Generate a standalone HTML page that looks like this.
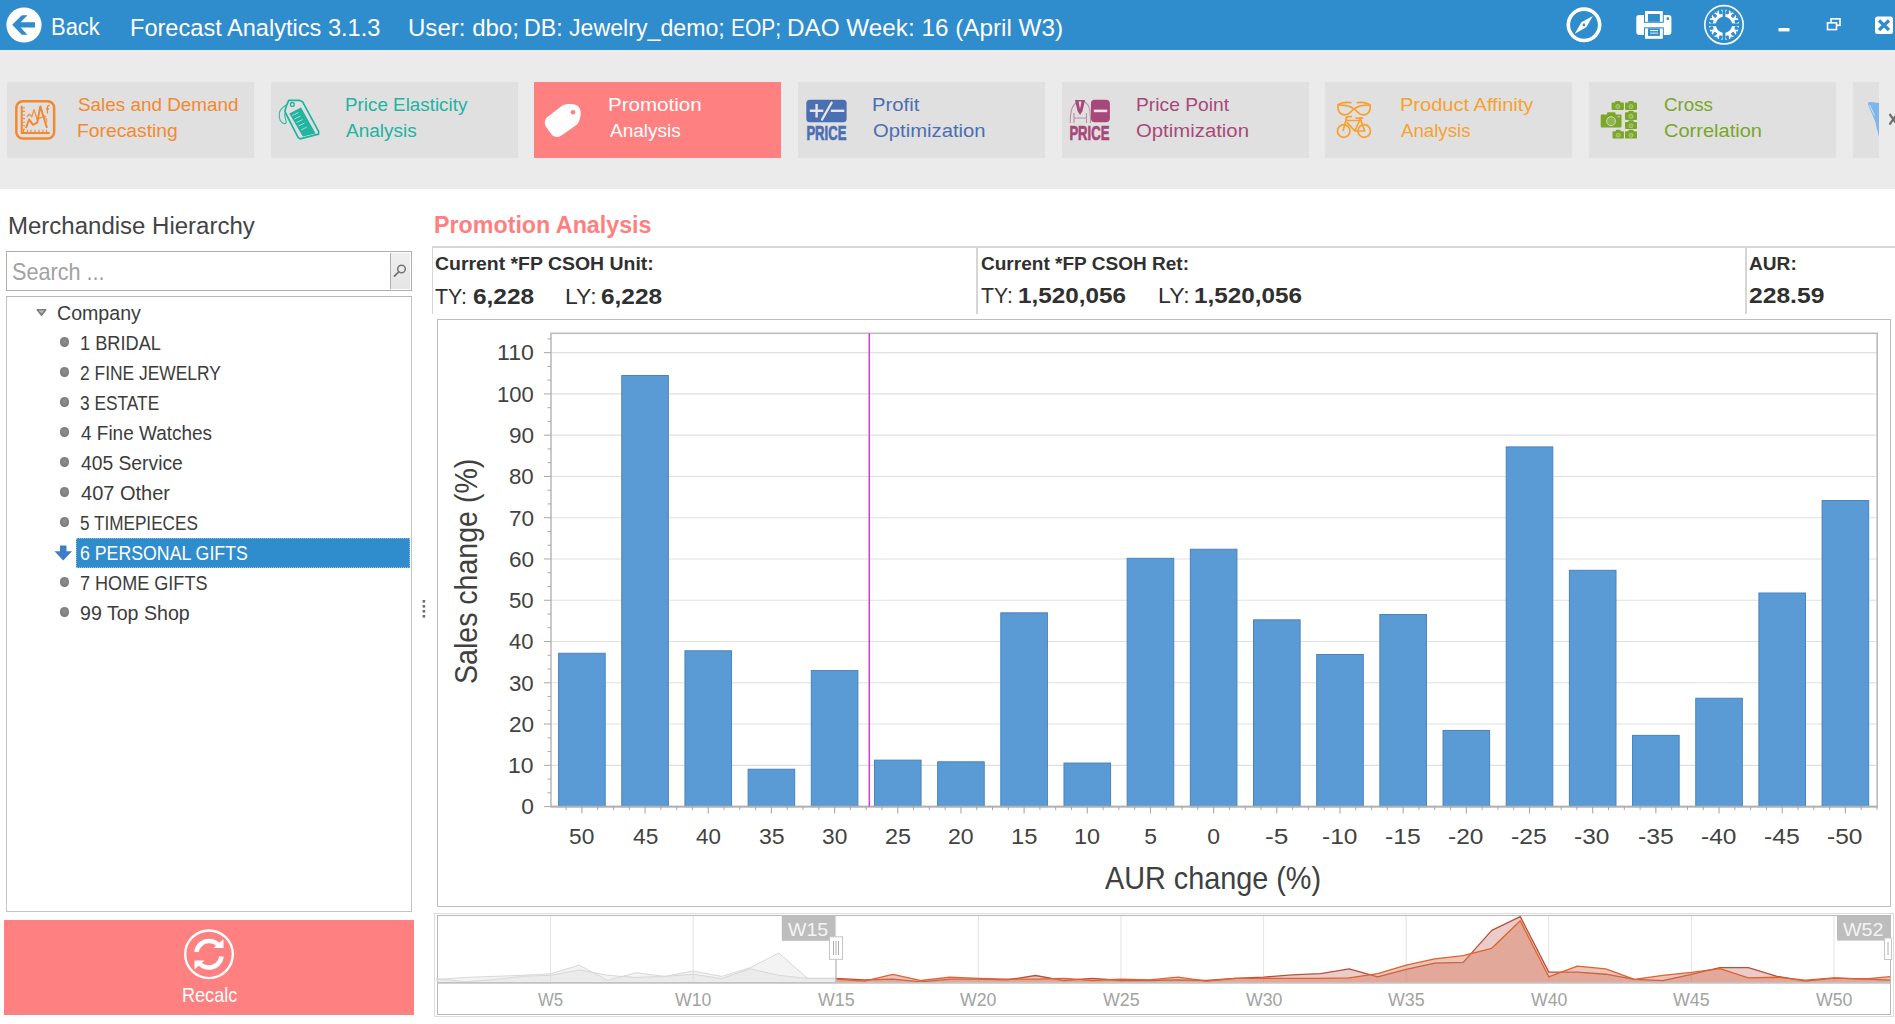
<!DOCTYPE html>
<html><head><meta charset="utf-8"><style>
html,body{margin:0;padding:0}
body{width:1895px;height:1024px;overflow:hidden;position:relative;background:#fff;font-family:"Liberation Sans", sans-serif}
.r{position:absolute;display:block}
.t{position:absolute;white-space:pre;font-family:"Liberation Sans", sans-serif}
</style></head><body>
<div class="r" style="left:0;top:0;width:1895px;height:50px;background:#2f8ccd"></div>
<svg class="r" style="left:0;top:0" width="50" height="50" viewBox="0 0 50 50">
<circle cx="24" cy="25" r="17.6" fill="#fff"/>
<path d="M12.2 24.8 L21.8 15.2 L27.5 15.2 L20.6 22.2 L35 22.2 L35 27.6 L20.6 27.6 L27.5 34.8 L21.8 34.8 Z" fill="#2f8ccd"/>
</svg>
<svg class="r" style="left:1500px;top:0" width="395" height="50" viewBox="1500 0 395 50">
<circle cx="1584" cy="24.8" r="15.7" fill="none" stroke="#fff" stroke-width="3.6"/>
<path d="M1592.9 15.9 L1586.3 27.3 L1574.8 33.7 L1581.4 22.3 Z" fill="#fff"/>
<circle cx="1583.9" cy="24.9" r="1.3" fill="#2f8ccd"/>
<rect x="1636.3" y="15" width="35.1" height="19.9" rx="2.8" fill="#fff"/>
<rect x="1644" y="10" width="19.8" height="12.8" fill="#2f8ccd"/>
<rect x="1645" y="11" width="17.8" height="10.8" fill="#fff"/>
<rect x="1648" y="14" width="11.9" height="7.8" fill="#2f8ccd"/>
<rect x="1644" y="27.3" width="19.8" height="12" fill="#2f8ccd"/>
<rect x="1645" y="28.4" width="17.8" height="10.4" fill="#fff"/>
<rect x="1648" y="28.4" width="11.9" height="7.5" fill="#2f8ccd"/>
<rect x="1650.1" y="30" width="7.9" height="1.1" fill="#fff"/>
<rect x="1650.1" y="32.6" width="7.9" height="1.1" fill="#d8e8f5"/>
<circle cx="1667.8" cy="18.7" r="1.4" fill="#2f8ccd"/>
<circle cx="1724" cy="24.8" r="19.2" fill="none" stroke="#fff" stroke-width="1.6"/>
<circle cx="1724" cy="24.8" r="9.6" fill="none" stroke="#fff" stroke-width="3"/>
<path d="M1722.30 15.30 L1722.50 12.20 L1721.00 9.80 L1727.00 9.80 L1725.50 12.20 L1725.70 15.30 Z M1727.28 15.72 L1729.00 13.14 L1728.90 10.31 L1734.10 13.31 L1731.60 14.64 L1730.22 17.42 Z M1731.38 18.58 L1734.16 17.20 L1735.49 14.70 L1738.49 19.90 L1735.66 19.80 L1733.08 21.52 Z M1733.50 23.10 L1736.60 23.30 L1739.00 21.80 L1739.00 27.80 L1736.60 26.30 L1733.50 26.50 Z M1733.08 28.08 L1735.66 29.80 L1738.49 29.70 L1735.49 34.90 L1734.16 32.40 L1731.38 31.02 Z M1730.22 32.18 L1731.60 34.96 L1734.10 36.29 L1728.90 39.29 L1729.00 36.46 L1727.28 33.88 Z M1725.70 34.30 L1725.50 37.40 L1727.00 39.80 L1721.00 39.80 L1722.50 37.40 L1722.30 34.30 Z M1720.72 33.88 L1719.00 36.46 L1719.10 39.29 L1713.90 36.29 L1716.40 34.96 L1717.78 32.18 Z M1716.62 31.02 L1713.84 32.40 L1712.51 34.90 L1709.51 29.70 L1712.34 29.80 L1714.92 28.08 Z M1714.50 26.50 L1711.40 26.30 L1709.00 27.80 L1709.00 21.80 L1711.40 23.30 L1714.50 23.10 Z M1714.92 21.52 L1712.34 19.80 L1709.51 19.90 L1712.51 14.70 L1713.84 17.20 L1716.62 18.58 Z M1717.78 17.42 L1716.40 14.64 L1713.90 13.31 L1719.10 10.31 L1719.00 13.14 L1720.72 15.72 Z" fill="#fff"/>
<path d="M1722.70 9.60 L1724.00 11.40 L1725.30 9.60 Z M1730.47 10.99 L1730.70 13.20 L1732.73 12.29 Z M1736.51 16.07 L1735.60 18.10 L1737.81 18.33 Z M1739.20 23.50 L1737.40 24.80 L1739.20 26.10 Z M1737.81 31.27 L1735.60 31.50 L1736.51 33.53 Z M1732.73 37.31 L1730.70 36.40 L1730.47 38.61 Z M1725.30 40.00 L1724.00 38.20 L1722.70 40.00 Z M1717.53 38.61 L1717.30 36.40 L1715.27 37.31 Z M1711.49 33.53 L1712.40 31.50 L1710.19 31.27 Z M1708.80 26.10 L1710.60 24.80 L1708.80 23.50 Z M1710.19 18.33 L1712.40 18.10 L1711.49 16.07 Z M1715.27 12.29 L1717.30 13.20 L1717.53 10.99 Z" fill="#2f8ccd"/>
<rect x="1722.6" y="9" width="2.8" height="32" fill="#2f8ccd"/>
<rect x="1708" y="23.4" width="32" height="2.8" fill="#2f8ccd"/>
<rect x="1778.5" y="28" width="11" height="3.4" fill="#fff"/>
<rect x="1831" y="18.8" width="9" height="6.5" fill="none" stroke="#fff" stroke-width="1.6"/>
<rect x="1827.5" y="22.8" width="9" height="6.8" fill="#2f8ccd" stroke="#fff" stroke-width="1.6"/>
<rect x="1875" y="16.5" width="18" height="17.5" rx="2.5" fill="#fff"/>
<path d="M1879 20.5 L1889 30 M1889 20.5 L1879 30" stroke="#2f8ccd" stroke-width="3.2"/>
</svg>
<div class="r" style="left:0;top:50px;width:1895px;height:138.5px;background:#ebebeb"></div>
<div class="r" style="left:7.00px;top:82px;width:247.00px;height:75.6px;background:#e0e0e0"></div>
<div class="r" style="left:270.67px;top:82px;width:247.00px;height:75.6px;background:#e0e0e0"></div>
<div class="r" style="left:534.34px;top:82px;width:247.00px;height:75.6px;background:#ff8080"></div>
<div class="r" style="left:798.01px;top:82px;width:247.00px;height:75.6px;background:#e0e0e0"></div>
<div class="r" style="left:1061.68px;top:82px;width:247.00px;height:75.6px;background:#e0e0e0"></div>
<div class="r" style="left:1325.35px;top:82px;width:247.00px;height:75.6px;background:#e0e0e0"></div>
<div class="r" style="left:1589.02px;top:82px;width:247.00px;height:75.6px;background:#e0e0e0"></div>
<div class="r" style="left:1852.69px;top:82px;width:26.31px;height:75.6px;background:#e0e0e0"></div>
<svg class="r" style="left:15px;top:100px" width="42" height="42" viewBox="0 0 42 42">
<rect x="1.35" y="1.2" width="37.8" height="37.3" rx="6.5" fill="none" stroke="#f5882f" stroke-width="2.5"/>
<g stroke="#f5882f" fill="none" stroke-linejoin="round">
<path d="M6.7 5.8 V33 H34.7" stroke-width="2"/>
<path d="M7.4 7.8h2.6M7.4 11.4h2.6M7.4 15.0h2.6M7.4 18.6h2.6M7.4 22.2h2.6M7.4 25.8h2.6M7.4 29.3h2.6M8.5 32.2v-2.4M12.3 32.2v-2.4M15.9 32.2v-2.4M19.9 32.2v-2.4M24.0 32.2v-2.4M28.0 32.2v-2.4M31.6 32.2v-2.4" stroke-width="1.1"/>
<path d="M10.9 28 L14.1 19.5 L18.1 24.9 L22.2 22.6 L25.3 6.4 L32 28" stroke-width="2"/>
<path d="M11.8 17.2 L14.1 14.1 L16.8 16.8 L19 9.6 L22.2 19.5 L24.9 18.1 L28.4 16.3 L31.1 16.8" stroke-width="1.4" opacity="0.85"/>
<path d="M30.2 18.5 C32 18 32.5 21 31 22.5" stroke-width="1.3" opacity="0.7"/>
</g>
<path d="M32.4 13.6 V8 C32.4 6 33.3 5.2 34.8 5.4 M31 9 H34" stroke="#f5882f" stroke-width="1.4" fill="none"/>
</svg>
<svg class="r" style="left:278px;top:99px" width="44" height="41" viewBox="0 0 44 41">
<path d="M10.75 1.3 L21.3 1.3 L24.5 2.7 L40.6 32.4 L40.6 35.2 L22 39.8 L20.2 38.6 L6.8 12.5 L8.5 6.5 Z" fill="none" stroke="#22b3a1" stroke-width="1.7" stroke-linejoin="round"/>
<path d="M11.3 14.4 L23 8.6 L37.7 34.4 L24.8 37.6 Z" fill="#22b3a1"/>
<circle cx="14.3" cy="5.4" r="1.9" fill="none" stroke="#22b3a1" stroke-width="1.3"/>
<path d="M9.5 5 C5 8 1.5 10.5 1.4 14 C1.2 17 1.2 19 1.9 20.5 C3 23 5 24.6 6.8 24.6 C8 24.6 8.3 23.6 8.1 22.5 C7.5 19.5 6.6 17 6.6 14.4" fill="none" stroke="#22b3a1" stroke-width="1.2" opacity="0.85"/>
<g stroke="#bfe9e2" stroke-width="0.9" fill="none" opacity="0.9">
<path d="M14.5 16.5 L20.5 13.5 M16.5 20 L22.5 17 M18.5 23.5 L24.5 20.5 M20.5 27 L26.5 24 M23 31 L29 28"/>
</g>
</svg>
<svg class="r" style="left:544px;top:102px" width="40" height="36" viewBox="0 0 40 36">
<path d="M25.15 2.06 C30 1.8 34 3 35.5 6 C37.2 9 37 14 35.5 18 C34.5 21 33 23 31 24 L16.95 33.7 C14 35.8 9.5 35 7.57 32.5 L1.7 24.3 C0.3 22 0.5 16.8 3.5 14.9 L16.4 5 C19 3 21.5 2.2 25.15 2.06 Z" fill="#fff"/>
<circle cx="29" cy="10.3" r="2.3" fill="#ff8080"/>
</svg>
<svg class="r" style="left:806px;top:99px" width="42" height="42" viewBox="0 0 42 42">
<rect x="0.3" y="0.7" width="40.3" height="22.5" rx="3.5" fill="#4a6fb3"/>
<path d="M3.8 11.8 H17.3 M10.6 5.1 V18.5" stroke="#e6e6e6" stroke-width="2.4"/>
<path d="M25.7 3.6 L16 20.6" stroke="#e6e6e6" stroke-width="2.2" stroke-linecap="round"/>
<path d="M24.8 11.8 H38.3" stroke="#e6e6e6" stroke-width="2.4"/>
<text x="20.4" y="41.2" text-anchor="middle" font-family="Liberation Sans" font-weight="bold" font-size="19.5" textLength="40" lengthAdjust="spacingAndGlyphs" fill="#4a6fb3" stroke="#4a6fb3" stroke-width="0.7">PRICE</text>
</svg>
<svg class="r" style="left:1069px;top:99px" width="42" height="42" viewBox="0 0 42 42">
<rect x="21.9" y="0.7" width="19" height="22.5" rx="4" fill="#a8487a"/>
<rect x="24.8" y="10.6" width="13.5" height="2.6" fill="#e6e6e6"/>
<g fill="none" stroke="#a8487a" stroke-width="1.1" opacity="0.55">
<path d="M1.2 24 C1.2 15 2 9 5 6 L9 2 L15 2 L19 6 C21 9 21.5 15 21.5 24"/>
<path d="M5 24 V14 M17.5 24 V14 M4.5 19 H18"/>
</g>
<path d="M6 1 L16 1 L13.5 12 L11 16 L8.5 12 Z" fill="#a8487a"/>
<path d="M9.5 2.5 L12.5 2.5 L11 10 Z" fill="#e0e0e0"/>
<text x="20.4" y="41.2" text-anchor="middle" font-family="Liberation Sans" font-weight="bold" font-size="19.5" textLength="40" lengthAdjust="spacingAndGlyphs" fill="#a8487a" stroke="#a8487a" stroke-width="0.7">PRICE</text>
</svg>
<svg class="r" style="left:1336px;top:100px" width="38" height="40" viewBox="0 0 38 40">
<g fill="none" stroke="#f8a12f" stroke-width="1.7" stroke-linecap="round" stroke-linejoin="round">
<path d="M1.9 5 C5 2.5 10 2 14.8 2.6"/><path d="M21.2 2.6 C26 2 31 2.5 34.1 5.2"/>
<path d="M1.9 5.2 C1.5 11 4 14.9 9 14.9 C13.5 14.9 15.2 11.5 17.7 8.7 C14 5.8 7 5 1.9 5.2 Z"/>
<path d="M34.3 5.2 C34.7 11 32.2 14.9 27.2 14.9 C22.7 14.9 21 11.5 18.5 8.7 C22.2 5.8 29.2 5 34.3 5.2 Z"/>
<circle cx="7.7" cy="31" r="6.3"/><circle cx="28.2" cy="31" r="6.3"/>
<path d="M10.7 17.5 L7.2 30.4 M11.3 20.5 H24.1 M11.3 22.8 L18.9 31 L28.6 31 M24.1 18.1 L28.8 31 M18.9 31 L24.1 19"/>
<path d="M10.1 17.5 C11.5 16.5 13.5 16.3 15.4 16.7"/><path d="M20 18.1 H26.5"/>
</g>
</svg>
<svg class="r" style="left:0;top:0" width="1895" height="160" viewBox="0 0 1895 160">
<rect x="1607" y="112.2" width="8.5" height="3.5" rx="1" fill="#7aa62a"/>
<rect x="1600.7" y="114.6" width="20.8" height="13" rx="1" fill="#7aa62a"/>
<circle cx="1611" cy="121.2" r="4.5" fill="#90b555" stroke="#d2e3b5" stroke-width="0.9"/>
<rect x="1617.5" y="116.3" width="2.5" height="1" fill="#c2d8a0"/>
<rect x="1615.04" y="101.00" width="5.41" height="3" rx="1" fill="#7aa62a"/><rect x="1611.60" y="102.60" width="12.30" height="7.30" rx="0.8" fill="#7aa62a"/><circle cx="1617.75" cy="106.55" r="2.04" fill="#90b555" stroke="#c2d8a0" stroke-width="0.6"/><rect x="1628.36" y="101.00" width="5.28" height="3" rx="1" fill="#7aa62a"/><rect x="1625.00" y="102.60" width="12.00" height="7.30" rx="0.8" fill="#7aa62a"/><circle cx="1631.00" cy="106.55" r="2.04" fill="#90b555" stroke="#c2d8a0" stroke-width="0.6"/><rect x="1628.36" y="110.70" width="5.28" height="3" rx="1" fill="#7aa62a"/><rect x="1625.00" y="112.30" width="12.00" height="7.60" rx="0.8" fill="#7aa62a"/><circle cx="1631.00" cy="116.40" r="2.13" fill="#90b555" stroke="#c2d8a0" stroke-width="0.6"/><rect x="1628.36" y="120.30" width="5.28" height="3" rx="1" fill="#7aa62a"/><rect x="1625.00" y="121.90" width="12.00" height="7.10" rx="0.8" fill="#7aa62a"/><circle cx="1631.00" cy="125.75" r="1.99" fill="#90b555" stroke="#c2d8a0" stroke-width="0.6"/><rect x="1615.69" y="129.70" width="5.02" height="3" rx="1" fill="#7aa62a"/><rect x="1612.50" y="131.30" width="11.40" height="7.30" rx="0.8" fill="#7aa62a"/><circle cx="1618.20" cy="135.25" r="2.04" fill="#90b555" stroke="#c2d8a0" stroke-width="0.6"/><rect x="1628.36" y="129.70" width="5.28" height="3" rx="1" fill="#7aa62a"/><rect x="1625.00" y="131.30" width="12.00" height="7.30" rx="0.8" fill="#7aa62a"/><circle cx="1631.00" cy="135.25" r="2.04" fill="#90b555" stroke="#c2d8a0" stroke-width="0.6"/>
</svg>
<svg class="r" style="left:1853px;top:82.5px" width="26" height="75" viewBox="1853 82.5 26 75">
<path d="M1867.8 103.5 C1868 102 1869 101.4 1871 101.6 L1879 102.5 L1879 124 L1876.5 124 Z" fill="#7fb6ea"/>
<path d="M1875.5 123 L1879 123 L1879 136.5 Z" fill="#7fb6ea"/>
<path d="M1869.5 104.5 L1874.5 115" stroke="#e8f1fa" stroke-width="0.8"/>
</svg>
<svg class="r" style="left:1889px;top:112px" width="6" height="14" viewBox="1889 112 6 14">
<path d="M1889.5 114 L1897 124.5 M1897 114 L1889.5 124.5" stroke="#6f6f6f" stroke-width="2.2"/>
</svg>
<div class="r" style="left:6.3px;top:251.2px;width:405.5px;height:39.6px;box-sizing:border-box;border:1.6px solid #afafaf;background:#fff"></div>
<div class="r" style="left:390.2px;top:252.8px;width:20px;height:36.4px;box-sizing:border-box;background:linear-gradient(#f0f0f0,#e4e4e4);border-left:1.5px solid #b0b0b0"></div>
<svg class="r" style="left:391px;top:260px" width="18" height="22" viewBox="0 0 18 22">
<circle cx="10.5" cy="9" r="3.8" fill="none" stroke="#777" stroke-width="1.5"/>
<path d="M7.8 11.8 L3.5 16" stroke="#777" stroke-width="1.8" stroke-linecap="round"/>
</svg>
<div class="r" style="left:6.4px;top:296.3px;width:405.6px;height:616px;box-sizing:border-box;border:1.7px solid #c4c4c4;border-top-color:#b9b9b9"></div>
<svg class="r" style="left:35px;top:307px" width="13" height="10" viewBox="0 0 13 10">
<defs><linearGradient id="tg" x1="0" y1="0" x2="0" y2="1"><stop offset="0" stop-color="#cfcfcf"/><stop offset="1" stop-color="#8a8a8a"/></linearGradient></defs>
<path d="M2.2 2.8 L10.8 2.8 L6.5 8.2 Z" fill="url(#tg)" stroke="#7a7a7a" stroke-width="1.4" stroke-linejoin="round"/>
</svg>
<div class="r" style="left:75.5px;top:537.5px;width:334.5px;height:30px;background:#2f8ccd;box-sizing:border-box;border:1px dotted #8cc0e8"></div>
<div class="r" style="left:60px;top:337.4px;width:9.2px;height:9.2px;border-radius:50%;background:radial-gradient(circle at 50% 45%,#8f8f8f 0,#808080 55%,#5e5e5e 100%)"></div>
<div class="r" style="left:60px;top:367.4px;width:9.2px;height:9.2px;border-radius:50%;background:radial-gradient(circle at 50% 45%,#8f8f8f 0,#808080 55%,#5e5e5e 100%)"></div>
<div class="r" style="left:60px;top:397.4px;width:9.2px;height:9.2px;border-radius:50%;background:radial-gradient(circle at 50% 45%,#8f8f8f 0,#808080 55%,#5e5e5e 100%)"></div>
<div class="r" style="left:60px;top:427.4px;width:9.2px;height:9.2px;border-radius:50%;background:radial-gradient(circle at 50% 45%,#8f8f8f 0,#808080 55%,#5e5e5e 100%)"></div>
<div class="r" style="left:60px;top:457.4px;width:9.2px;height:9.2px;border-radius:50%;background:radial-gradient(circle at 50% 45%,#8f8f8f 0,#808080 55%,#5e5e5e 100%)"></div>
<div class="r" style="left:60px;top:487.4px;width:9.2px;height:9.2px;border-radius:50%;background:radial-gradient(circle at 50% 45%,#8f8f8f 0,#808080 55%,#5e5e5e 100%)"></div>
<div class="r" style="left:60px;top:517.4px;width:9.2px;height:9.2px;border-radius:50%;background:radial-gradient(circle at 50% 45%,#8f8f8f 0,#808080 55%,#5e5e5e 100%)"></div>
<svg class="r" style="left:54px;top:544.5px" width="19" height="16" viewBox="0 0 19 16">
<path d="M6 0.5 H12.5 V6.2 H18 L9.25 15.5 L0.5 6.2 H6 Z" fill="#3d7fc6"/></svg>
<div class="r" style="left:60px;top:577.4px;width:9.2px;height:9.2px;border-radius:50%;background:radial-gradient(circle at 50% 45%,#8f8f8f 0,#808080 55%,#5e5e5e 100%)"></div>
<div class="r" style="left:60px;top:607.4px;width:9.2px;height:9.2px;border-radius:50%;background:radial-gradient(circle at 50% 45%,#8f8f8f 0,#808080 55%,#5e5e5e 100%)"></div>
<div class="r" style="left:4px;top:920px;width:409.5px;height:95px;background:#ff8080"></div>
<svg class="r" style="left:183px;top:927.7px" width="52" height="52" viewBox="0 0 52 52">
<circle cx="26" cy="26.3" r="23.8" fill="none" stroke="#fff" stroke-width="2.4"/>
<path d="M13.5 24 C14.5 17 20 13 26 13 C30.5 13 34 15 36.5 18.2" fill="none" stroke="#fff" stroke-width="4.6"/>
<path d="M30.5 20 L40.5 20 L40.5 11 Z" fill="#fff"/>
<path d="M38.5 28.5 C37.5 35.5 32 39.5 26 39.5 C21.5 39.5 18 37.5 15.5 34.3" fill="none" stroke="#fff" stroke-width="4.6"/>
<path d="M21.5 32.5 L11.5 32.5 L11.5 41.5 Z" fill="#fff"/>
</svg>
<svg class="r" style="left:418px;top:595px" width="12" height="28" viewBox="418 595 12 28">
<rect x="422.6" y="600" width="2.6" height="2.6" fill="#6e6e6e"/><rect x="422.6" y="605" width="2.6" height="2.6" fill="#6e6e6e"/>
<rect x="422.6" y="610" width="2.6" height="2.6" fill="#6e6e6e"/><rect x="422.6" y="615" width="2.6" height="2.6" fill="#6e6e6e"/>
</svg>
<div class="r" style="left:431.5px;top:246px;width:1464px;height:1.6px;background:#d6d6d6"></div>
<div class="r" style="left:431.5px;top:246px;width:1.6px;height:67.5px;background:#d6d6d6"></div>
<div class="r" style="left:976.3px;top:247px;width:1.6px;height:66.5px;background:#d6d6d6"></div>
<div class="r" style="left:1745.2px;top:247px;width:1.6px;height:66.5px;background:#d6d6d6"></div>
<div class="r" style="left:436.5px;top:319px;width:1454.5px;height:588px;box-sizing:border-box;border:1.5px solid #bdbdbd"></div>
<svg class="r" style="left:0;top:0" width="1895" height="1024" viewBox="0 0 1895 1024">
<line x1="551.0" y1="765.33" x2="1877.2" y2="765.33" stroke="#e0e0e0" stroke-width="1.1"/>
<line x1="551.0" y1="724.06" x2="1877.2" y2="724.06" stroke="#e0e0e0" stroke-width="1.1"/>
<line x1="551.0" y1="682.79" x2="1877.2" y2="682.79" stroke="#e0e0e0" stroke-width="1.1"/>
<line x1="551.0" y1="641.52" x2="1877.2" y2="641.52" stroke="#e0e0e0" stroke-width="1.1"/>
<line x1="551.0" y1="600.25" x2="1877.2" y2="600.25" stroke="#e0e0e0" stroke-width="1.1"/>
<line x1="551.0" y1="558.98" x2="1877.2" y2="558.98" stroke="#e0e0e0" stroke-width="1.1"/>
<line x1="551.0" y1="517.71" x2="1877.2" y2="517.71" stroke="#e0e0e0" stroke-width="1.1"/>
<line x1="551.0" y1="476.44" x2="1877.2" y2="476.44" stroke="#e0e0e0" stroke-width="1.1"/>
<line x1="551.0" y1="435.17" x2="1877.2" y2="435.17" stroke="#e0e0e0" stroke-width="1.1"/>
<line x1="551.0" y1="393.90" x2="1877.2" y2="393.90" stroke="#e0e0e0" stroke-width="1.1"/>
<line x1="551.0" y1="352.63" x2="1877.2" y2="352.63" stroke="#e0e0e0" stroke-width="1.1"/>
<rect x="551.0" y="333.3" width="1326.20" height="473.30" fill="none" stroke="#bcbcbc" stroke-width="1.6"/>
<line x1="544.0" y1="806.60" x2="551.0" y2="806.60" stroke="#a8a8a8" stroke-width="1"/>
<line x1="547.5" y1="792.84" x2="551.0" y2="792.84" stroke="#a8a8a8" stroke-width="1"/>
<line x1="547.5" y1="779.09" x2="551.0" y2="779.09" stroke="#a8a8a8" stroke-width="1"/>
<line x1="544.0" y1="765.33" x2="551.0" y2="765.33" stroke="#a8a8a8" stroke-width="1"/>
<line x1="547.5" y1="751.57" x2="551.0" y2="751.57" stroke="#a8a8a8" stroke-width="1"/>
<line x1="547.5" y1="737.82" x2="551.0" y2="737.82" stroke="#a8a8a8" stroke-width="1"/>
<line x1="544.0" y1="724.06" x2="551.0" y2="724.06" stroke="#a8a8a8" stroke-width="1"/>
<line x1="547.5" y1="710.30" x2="551.0" y2="710.30" stroke="#a8a8a8" stroke-width="1"/>
<line x1="547.5" y1="696.55" x2="551.0" y2="696.55" stroke="#a8a8a8" stroke-width="1"/>
<line x1="544.0" y1="682.79" x2="551.0" y2="682.79" stroke="#a8a8a8" stroke-width="1"/>
<line x1="547.5" y1="669.03" x2="551.0" y2="669.03" stroke="#a8a8a8" stroke-width="1"/>
<line x1="547.5" y1="655.28" x2="551.0" y2="655.28" stroke="#a8a8a8" stroke-width="1"/>
<line x1="544.0" y1="641.52" x2="551.0" y2="641.52" stroke="#a8a8a8" stroke-width="1"/>
<line x1="547.5" y1="627.76" x2="551.0" y2="627.76" stroke="#a8a8a8" stroke-width="1"/>
<line x1="547.5" y1="614.01" x2="551.0" y2="614.01" stroke="#a8a8a8" stroke-width="1"/>
<line x1="544.0" y1="600.25" x2="551.0" y2="600.25" stroke="#a8a8a8" stroke-width="1"/>
<line x1="547.5" y1="586.49" x2="551.0" y2="586.49" stroke="#a8a8a8" stroke-width="1"/>
<line x1="547.5" y1="572.74" x2="551.0" y2="572.74" stroke="#a8a8a8" stroke-width="1"/>
<line x1="544.0" y1="558.98" x2="551.0" y2="558.98" stroke="#a8a8a8" stroke-width="1"/>
<line x1="547.5" y1="545.22" x2="551.0" y2="545.22" stroke="#a8a8a8" stroke-width="1"/>
<line x1="547.5" y1="531.47" x2="551.0" y2="531.47" stroke="#a8a8a8" stroke-width="1"/>
<line x1="544.0" y1="517.71" x2="551.0" y2="517.71" stroke="#a8a8a8" stroke-width="1"/>
<line x1="547.5" y1="503.95" x2="551.0" y2="503.95" stroke="#a8a8a8" stroke-width="1"/>
<line x1="547.5" y1="490.20" x2="551.0" y2="490.20" stroke="#a8a8a8" stroke-width="1"/>
<line x1="544.0" y1="476.44" x2="551.0" y2="476.44" stroke="#a8a8a8" stroke-width="1"/>
<line x1="547.5" y1="462.68" x2="551.0" y2="462.68" stroke="#a8a8a8" stroke-width="1"/>
<line x1="547.5" y1="448.93" x2="551.0" y2="448.93" stroke="#a8a8a8" stroke-width="1"/>
<line x1="544.0" y1="435.17" x2="551.0" y2="435.17" stroke="#a8a8a8" stroke-width="1"/>
<line x1="547.5" y1="421.41" x2="551.0" y2="421.41" stroke="#a8a8a8" stroke-width="1"/>
<line x1="547.5" y1="407.66" x2="551.0" y2="407.66" stroke="#a8a8a8" stroke-width="1"/>
<line x1="544.0" y1="393.90" x2="551.0" y2="393.90" stroke="#a8a8a8" stroke-width="1"/>
<line x1="547.5" y1="380.14" x2="551.0" y2="380.14" stroke="#a8a8a8" stroke-width="1"/>
<line x1="547.5" y1="366.39" x2="551.0" y2="366.39" stroke="#a8a8a8" stroke-width="1"/>
<line x1="544.0" y1="352.63" x2="551.0" y2="352.63" stroke="#a8a8a8" stroke-width="1"/>
<line x1="547.5" y1="338.87" x2="551.0" y2="338.87" stroke="#a8a8a8" stroke-width="1"/>
<rect x="558.59" y="653.26" width="46.6" height="153.34" fill="#5b9bd5" stroke="#4a82bd" stroke-width="1"/>
<rect x="621.76" y="375.52" width="46.6" height="431.08" fill="#5b9bd5" stroke="#4a82bd" stroke-width="1"/>
<rect x="684.94" y="650.79" width="46.6" height="155.81" fill="#5b9bd5" stroke="#4a82bd" stroke-width="1"/>
<rect x="748.11" y="769.23" width="46.6" height="37.37" fill="#5b9bd5" stroke="#4a82bd" stroke-width="1"/>
<rect x="811.29" y="670.60" width="46.6" height="136.00" fill="#5b9bd5" stroke="#4a82bd" stroke-width="1"/>
<rect x="874.46" y="760.15" width="46.6" height="46.45" fill="#5b9bd5" stroke="#4a82bd" stroke-width="1"/>
<rect x="937.64" y="761.80" width="46.6" height="44.80" fill="#5b9bd5" stroke="#4a82bd" stroke-width="1"/>
<rect x="1000.81" y="612.82" width="46.6" height="193.78" fill="#5b9bd5" stroke="#4a82bd" stroke-width="1"/>
<rect x="1063.99" y="763.04" width="46.6" height="43.56" fill="#5b9bd5" stroke="#4a82bd" stroke-width="1"/>
<rect x="1127.16" y="558.34" width="46.6" height="248.26" fill="#5b9bd5" stroke="#4a82bd" stroke-width="1"/>
<rect x="1190.34" y="549.26" width="46.6" height="257.34" fill="#5b9bd5" stroke="#4a82bd" stroke-width="1"/>
<rect x="1253.51" y="619.83" width="46.6" height="186.77" fill="#5b9bd5" stroke="#4a82bd" stroke-width="1"/>
<rect x="1316.69" y="654.50" width="46.6" height="152.10" fill="#5b9bd5" stroke="#4a82bd" stroke-width="1"/>
<rect x="1379.86" y="614.47" width="46.6" height="192.13" fill="#5b9bd5" stroke="#4a82bd" stroke-width="1"/>
<rect x="1443.04" y="730.44" width="46.6" height="76.16" fill="#5b9bd5" stroke="#4a82bd" stroke-width="1"/>
<rect x="1506.21" y="446.91" width="46.6" height="359.69" fill="#5b9bd5" stroke="#4a82bd" stroke-width="1"/>
<rect x="1569.39" y="570.31" width="46.6" height="236.29" fill="#5b9bd5" stroke="#4a82bd" stroke-width="1"/>
<rect x="1632.56" y="735.39" width="46.6" height="71.21" fill="#5b9bd5" stroke="#4a82bd" stroke-width="1"/>
<rect x="1695.74" y="698.25" width="46.6" height="108.35" fill="#5b9bd5" stroke="#4a82bd" stroke-width="1"/>
<rect x="1758.91" y="593.01" width="46.6" height="213.59" fill="#5b9bd5" stroke="#4a82bd" stroke-width="1"/>
<rect x="1822.09" y="500.56" width="46.6" height="306.04" fill="#5b9bd5" stroke="#4a82bd" stroke-width="1"/>
<line x1="551.0" y1="806.6" x2="1877.2" y2="806.6" stroke="#b0b0b0" stroke-width="1.6"/>
<line x1="566.09" y1="806.6" x2="566.09" y2="810.1" stroke="#a8a8a8" stroke-width="1"/>
<line x1="581.89" y1="806.6" x2="581.89" y2="813.6" stroke="#a8a8a8" stroke-width="1.1"/>
<line x1="597.68" y1="806.6" x2="597.68" y2="810.1" stroke="#a8a8a8" stroke-width="1"/>
<line x1="613.47" y1="806.6" x2="613.47" y2="810.1" stroke="#a8a8a8" stroke-width="1"/>
<line x1="629.27" y1="806.6" x2="629.27" y2="810.1" stroke="#a8a8a8" stroke-width="1"/>
<line x1="645.06" y1="806.6" x2="645.06" y2="813.6" stroke="#a8a8a8" stroke-width="1.1"/>
<line x1="660.86" y1="806.6" x2="660.86" y2="810.1" stroke="#a8a8a8" stroke-width="1"/>
<line x1="676.65" y1="806.6" x2="676.65" y2="810.1" stroke="#a8a8a8" stroke-width="1"/>
<line x1="692.44" y1="806.6" x2="692.44" y2="810.1" stroke="#a8a8a8" stroke-width="1"/>
<line x1="708.24" y1="806.6" x2="708.24" y2="813.6" stroke="#a8a8a8" stroke-width="1.1"/>
<line x1="724.03" y1="806.6" x2="724.03" y2="810.1" stroke="#a8a8a8" stroke-width="1"/>
<line x1="739.82" y1="806.6" x2="739.82" y2="810.1" stroke="#a8a8a8" stroke-width="1"/>
<line x1="755.62" y1="806.6" x2="755.62" y2="810.1" stroke="#a8a8a8" stroke-width="1"/>
<line x1="771.41" y1="806.6" x2="771.41" y2="813.6" stroke="#a8a8a8" stroke-width="1.1"/>
<line x1="787.21" y1="806.6" x2="787.21" y2="810.1" stroke="#a8a8a8" stroke-width="1"/>
<line x1="803.00" y1="806.6" x2="803.00" y2="810.1" stroke="#a8a8a8" stroke-width="1"/>
<line x1="818.79" y1="806.6" x2="818.79" y2="810.1" stroke="#a8a8a8" stroke-width="1"/>
<line x1="834.59" y1="806.6" x2="834.59" y2="813.6" stroke="#a8a8a8" stroke-width="1.1"/>
<line x1="850.38" y1="806.6" x2="850.38" y2="810.1" stroke="#a8a8a8" stroke-width="1"/>
<line x1="866.17" y1="806.6" x2="866.17" y2="810.1" stroke="#a8a8a8" stroke-width="1"/>
<line x1="881.97" y1="806.6" x2="881.97" y2="810.1" stroke="#a8a8a8" stroke-width="1"/>
<line x1="897.76" y1="806.6" x2="897.76" y2="813.6" stroke="#a8a8a8" stroke-width="1.1"/>
<line x1="913.56" y1="806.6" x2="913.56" y2="810.1" stroke="#a8a8a8" stroke-width="1"/>
<line x1="929.35" y1="806.6" x2="929.35" y2="810.1" stroke="#a8a8a8" stroke-width="1"/>
<line x1="945.14" y1="806.6" x2="945.14" y2="810.1" stroke="#a8a8a8" stroke-width="1"/>
<line x1="960.94" y1="806.6" x2="960.94" y2="813.6" stroke="#a8a8a8" stroke-width="1.1"/>
<line x1="976.73" y1="806.6" x2="976.73" y2="810.1" stroke="#a8a8a8" stroke-width="1"/>
<line x1="992.52" y1="806.6" x2="992.52" y2="810.1" stroke="#a8a8a8" stroke-width="1"/>
<line x1="1008.32" y1="806.6" x2="1008.32" y2="810.1" stroke="#a8a8a8" stroke-width="1"/>
<line x1="1024.11" y1="806.6" x2="1024.11" y2="813.6" stroke="#a8a8a8" stroke-width="1.1"/>
<line x1="1039.91" y1="806.6" x2="1039.91" y2="810.1" stroke="#a8a8a8" stroke-width="1"/>
<line x1="1055.70" y1="806.6" x2="1055.70" y2="810.1" stroke="#a8a8a8" stroke-width="1"/>
<line x1="1071.49" y1="806.6" x2="1071.49" y2="810.1" stroke="#a8a8a8" stroke-width="1"/>
<line x1="1087.29" y1="806.6" x2="1087.29" y2="813.6" stroke="#a8a8a8" stroke-width="1.1"/>
<line x1="1103.08" y1="806.6" x2="1103.08" y2="810.1" stroke="#a8a8a8" stroke-width="1"/>
<line x1="1118.88" y1="806.6" x2="1118.88" y2="810.1" stroke="#a8a8a8" stroke-width="1"/>
<line x1="1134.67" y1="806.6" x2="1134.67" y2="810.1" stroke="#a8a8a8" stroke-width="1"/>
<line x1="1150.46" y1="806.6" x2="1150.46" y2="813.6" stroke="#a8a8a8" stroke-width="1.1"/>
<line x1="1166.26" y1="806.6" x2="1166.26" y2="810.1" stroke="#a8a8a8" stroke-width="1"/>
<line x1="1182.05" y1="806.6" x2="1182.05" y2="810.1" stroke="#a8a8a8" stroke-width="1"/>
<line x1="1197.84" y1="806.6" x2="1197.84" y2="810.1" stroke="#a8a8a8" stroke-width="1"/>
<line x1="1213.64" y1="806.6" x2="1213.64" y2="813.6" stroke="#a8a8a8" stroke-width="1.1"/>
<line x1="1229.43" y1="806.6" x2="1229.43" y2="810.1" stroke="#a8a8a8" stroke-width="1"/>
<line x1="1245.22" y1="806.6" x2="1245.22" y2="810.1" stroke="#a8a8a8" stroke-width="1"/>
<line x1="1261.02" y1="806.6" x2="1261.02" y2="810.1" stroke="#a8a8a8" stroke-width="1"/>
<line x1="1276.81" y1="806.6" x2="1276.81" y2="813.6" stroke="#a8a8a8" stroke-width="1.1"/>
<line x1="1292.61" y1="806.6" x2="1292.61" y2="810.1" stroke="#a8a8a8" stroke-width="1"/>
<line x1="1308.40" y1="806.6" x2="1308.40" y2="810.1" stroke="#a8a8a8" stroke-width="1"/>
<line x1="1324.19" y1="806.6" x2="1324.19" y2="810.1" stroke="#a8a8a8" stroke-width="1"/>
<line x1="1339.99" y1="806.6" x2="1339.99" y2="813.6" stroke="#a8a8a8" stroke-width="1.1"/>
<line x1="1355.78" y1="806.6" x2="1355.78" y2="810.1" stroke="#a8a8a8" stroke-width="1"/>
<line x1="1371.57" y1="806.6" x2="1371.57" y2="810.1" stroke="#a8a8a8" stroke-width="1"/>
<line x1="1387.37" y1="806.6" x2="1387.37" y2="810.1" stroke="#a8a8a8" stroke-width="1"/>
<line x1="1403.16" y1="806.6" x2="1403.16" y2="813.6" stroke="#a8a8a8" stroke-width="1.1"/>
<line x1="1418.96" y1="806.6" x2="1418.96" y2="810.1" stroke="#a8a8a8" stroke-width="1"/>
<line x1="1434.75" y1="806.6" x2="1434.75" y2="810.1" stroke="#a8a8a8" stroke-width="1"/>
<line x1="1450.54" y1="806.6" x2="1450.54" y2="810.1" stroke="#a8a8a8" stroke-width="1"/>
<line x1="1466.34" y1="806.6" x2="1466.34" y2="813.6" stroke="#a8a8a8" stroke-width="1.1"/>
<line x1="1482.13" y1="806.6" x2="1482.13" y2="810.1" stroke="#a8a8a8" stroke-width="1"/>
<line x1="1497.92" y1="806.6" x2="1497.92" y2="810.1" stroke="#a8a8a8" stroke-width="1"/>
<line x1="1513.72" y1="806.6" x2="1513.72" y2="810.1" stroke="#a8a8a8" stroke-width="1"/>
<line x1="1529.51" y1="806.6" x2="1529.51" y2="813.6" stroke="#a8a8a8" stroke-width="1.1"/>
<line x1="1545.31" y1="806.6" x2="1545.31" y2="810.1" stroke="#a8a8a8" stroke-width="1"/>
<line x1="1561.10" y1="806.6" x2="1561.10" y2="810.1" stroke="#a8a8a8" stroke-width="1"/>
<line x1="1576.89" y1="806.6" x2="1576.89" y2="810.1" stroke="#a8a8a8" stroke-width="1"/>
<line x1="1592.69" y1="806.6" x2="1592.69" y2="813.6" stroke="#a8a8a8" stroke-width="1.1"/>
<line x1="1608.48" y1="806.6" x2="1608.48" y2="810.1" stroke="#a8a8a8" stroke-width="1"/>
<line x1="1624.27" y1="806.6" x2="1624.27" y2="810.1" stroke="#a8a8a8" stroke-width="1"/>
<line x1="1640.07" y1="806.6" x2="1640.07" y2="810.1" stroke="#a8a8a8" stroke-width="1"/>
<line x1="1655.86" y1="806.6" x2="1655.86" y2="813.6" stroke="#a8a8a8" stroke-width="1.1"/>
<line x1="1671.66" y1="806.6" x2="1671.66" y2="810.1" stroke="#a8a8a8" stroke-width="1"/>
<line x1="1687.45" y1="806.6" x2="1687.45" y2="810.1" stroke="#a8a8a8" stroke-width="1"/>
<line x1="1703.24" y1="806.6" x2="1703.24" y2="810.1" stroke="#a8a8a8" stroke-width="1"/>
<line x1="1719.04" y1="806.6" x2="1719.04" y2="813.6" stroke="#a8a8a8" stroke-width="1.1"/>
<line x1="1734.83" y1="806.6" x2="1734.83" y2="810.1" stroke="#a8a8a8" stroke-width="1"/>
<line x1="1750.62" y1="806.6" x2="1750.62" y2="810.1" stroke="#a8a8a8" stroke-width="1"/>
<line x1="1766.42" y1="806.6" x2="1766.42" y2="810.1" stroke="#a8a8a8" stroke-width="1"/>
<line x1="1782.21" y1="806.6" x2="1782.21" y2="813.6" stroke="#a8a8a8" stroke-width="1.1"/>
<line x1="1798.01" y1="806.6" x2="1798.01" y2="810.1" stroke="#a8a8a8" stroke-width="1"/>
<line x1="1813.80" y1="806.6" x2="1813.80" y2="810.1" stroke="#a8a8a8" stroke-width="1"/>
<line x1="1829.59" y1="806.6" x2="1829.59" y2="810.1" stroke="#a8a8a8" stroke-width="1"/>
<line x1="1845.39" y1="806.6" x2="1845.39" y2="813.6" stroke="#a8a8a8" stroke-width="1.1"/>
<line x1="1861.18" y1="806.6" x2="1861.18" y2="810.1" stroke="#a8a8a8" stroke-width="1"/>
<line x1="1876.97" y1="806.6" x2="1876.97" y2="810.1" stroke="#a8a8a8" stroke-width="1"/>
<line x1="869.3" y1="333.3" x2="869.3" y2="806.6" stroke="#d63ad6" stroke-width="1.5"/>
</svg>
<div class="r" style="left:434px;top:913px;width:1460px;height:104px;box-sizing:border-box;border:1.3px solid #dcdcdc"></div>
<div class="r" style="left:436.7px;top:915px;width:1454.5px;height:99.5px;box-sizing:border-box;border:1.6px solid #b9b9b9;background:#fff"></div>
<svg class="r" style="left:0;top:0" width="1895" height="1024" viewBox="0 0 1895 1024">
<line x1="550.58" y1="916" x2="550.58" y2="982.3" stroke="#e3e3e3" stroke-width="1"/>
<line x1="693.18" y1="916" x2="693.18" y2="982.3" stroke="#e3e3e3" stroke-width="1"/>
<line x1="835.78" y1="916" x2="835.78" y2="982.3" stroke="#e3e3e3" stroke-width="1"/>
<line x1="978.38" y1="916" x2="978.38" y2="982.3" stroke="#e3e3e3" stroke-width="1"/>
<line x1="1120.98" y1="916" x2="1120.98" y2="982.3" stroke="#e3e3e3" stroke-width="1"/>
<line x1="1263.58" y1="916" x2="1263.58" y2="982.3" stroke="#e3e3e3" stroke-width="1"/>
<line x1="1406.18" y1="916" x2="1406.18" y2="982.3" stroke="#e3e3e3" stroke-width="1"/>
<line x1="1548.78" y1="916" x2="1548.78" y2="982.3" stroke="#e3e3e3" stroke-width="1"/>
<line x1="1691.38" y1="916" x2="1691.38" y2="982.3" stroke="#e3e3e3" stroke-width="1"/>
<line x1="1833.98" y1="916" x2="1833.98" y2="982.3" stroke="#e3e3e3" stroke-width="1"/>
<path d="M436.50 982.30 L436.50 979.64 L465.02 977.48 L493.54 976.40 L522.06 975.32 L550.58 973.80 L579.10 965.15 L607.62 980.29 L636.14 972.72 L664.66 976.40 L693.18 970.99 L721.70 976.40 L750.22 967.74 L778.74 953.03 L807.26 978.13 L835.78 978.13 L835.78 982.30 Z" fill="#dcdcdc" fill-opacity="0.35"/><path d="M436.50 979.64 L465.02 977.48 L493.54 976.40 L522.06 975.32 L550.58 973.80 L579.10 965.15 L607.62 980.29 L636.14 972.72 L664.66 976.40 L693.18 970.99 L721.70 976.40 L750.22 967.74 L778.74 953.03 L807.26 978.13 L835.78 978.13" fill="none" stroke="#d8d8d8" stroke-width="1.0" stroke-linejoin="round"/>
<path d="M436.50 982.30 L436.50 978.56 L465.02 981.81 L493.54 979.64 L522.06 976.40 L550.58 975.32 L579.10 969.91 L607.62 975.32 L636.14 977.48 L664.66 976.40 L693.18 974.23 L721.70 978.56 L750.22 968.83 L778.74 975.32 L807.26 978.56 L835.78 978.56 L835.78 982.30 Z" fill="#dcdcdc" fill-opacity="0.35"/><path d="M436.50 978.56 L465.02 981.81 L493.54 979.64 L522.06 976.40 L550.58 975.32 L579.10 969.91 L607.62 975.32 L636.14 977.48 L664.66 976.40 L693.18 974.23 L721.70 978.56 L750.22 968.83 L778.74 975.32 L807.26 978.56 L835.78 978.56" fill="none" stroke="#d8d8d8" stroke-width="1.0" stroke-linejoin="round"/>
<path d="M835.78 982.30 L835.78 978.29 L864.30 979.97 L892.82 979.13 L921.34 981.92 L949.86 979.13 L978.38 979.13 L1006.90 979.97 L1035.42 975.49 L1063.94 980.52 L1092.46 978.29 L1120.98 980.52 L1149.50 980.52 L1178.02 979.97 L1206.54 980.52 L1235.06 978.29 L1263.58 977.17 L1292.10 974.93 L1320.62 973.53 L1349.14 968.96 L1377.66 976.77 L1406.18 969.38 L1434.70 963.05 L1463.22 962.41 L1491.74 930.33 L1520.26 916.61 L1548.78 972.12 L1577.30 972.12 L1605.82 974.23 L1634.34 979.30 L1662.86 980.53 L1691.38 974.36 L1719.90 967.62 L1748.42 967.62 L1776.94 976.29 L1805.46 981.11 L1833.98 978.22 L1862.50 978.80 L1890.00 980.14 L1890.00 982.30 Z" fill="#c0605a" fill-opacity="0.32"/><path d="M835.78 978.29 L864.30 979.97 L892.82 979.13 L921.34 981.92 L949.86 979.13 L978.38 979.13 L1006.90 979.97 L1035.42 975.49 L1063.94 980.52 L1092.46 978.29 L1120.98 980.52 L1149.50 980.52 L1178.02 979.97 L1206.54 980.52 L1235.06 978.29 L1263.58 977.17 L1292.10 974.93 L1320.62 973.53 L1349.14 968.96 L1377.66 976.77 L1406.18 969.38 L1434.70 963.05 L1463.22 962.41 L1491.74 930.33 L1520.26 916.61 L1548.78 972.12 L1577.30 972.12 L1605.82 974.23 L1634.34 979.30 L1662.86 980.53 L1691.38 974.36 L1719.90 967.62 L1748.42 967.62 L1776.94 976.29 L1805.46 981.11 L1833.98 978.22 L1862.50 978.80 L1890.00 980.14" fill="none" stroke="#b8503a" stroke-width="1.3" stroke-linejoin="round"/>
<path d="M835.78 982.30 L835.78 979.13 L864.30 981.08 L892.82 974.37 L921.34 980.52 L949.86 977.17 L978.38 978.29 L1006.90 979.13 L1035.42 979.13 L1063.94 978.29 L1092.46 980.52 L1120.98 979.13 L1149.50 979.97 L1178.02 977.17 L1206.54 981.08 L1235.06 978.29 L1263.58 978.29 L1292.10 978.29 L1320.62 978.29 L1349.14 977.82 L1377.66 973.60 L1406.18 965.16 L1434.70 958.83 L1463.22 955.66 L1491.74 948.27 L1520.26 920.83 L1548.78 976.77 L1577.30 966.21 L1605.82 968.96 L1634.34 979.30 L1662.86 975.33 L1691.38 972.44 L1719.90 968.58 L1748.42 977.83 L1776.94 977.25 L1805.46 980.14 L1833.98 977.83 L1862.50 979.18 L1890.00 976.68 L1890.00 982.30 Z" fill="#d87c5e" fill-opacity="0.45"/><path d="M835.78 979.13 L864.30 981.08 L892.82 974.37 L921.34 980.52 L949.86 977.17 L978.38 978.29 L1006.90 979.13 L1035.42 979.13 L1063.94 978.29 L1092.46 980.52 L1120.98 979.13 L1149.50 979.97 L1178.02 977.17 L1206.54 981.08 L1235.06 978.29 L1263.58 978.29 L1292.10 978.29 L1320.62 978.29 L1349.14 977.82 L1377.66 973.60 L1406.18 965.16 L1434.70 958.83 L1463.22 955.66 L1491.74 948.27 L1520.26 920.83 L1548.78 976.77 L1577.30 966.21 L1605.82 968.96 L1634.34 979.30 L1662.86 975.33 L1691.38 972.44 L1719.90 968.58 L1748.42 977.83 L1776.94 977.25 L1805.46 980.14 L1833.98 977.83 L1862.50 979.18 L1890.00 976.68" fill="none" stroke="#e0622e" stroke-width="1.3" stroke-linejoin="round"/>
<line x1="437.5" y1="982.9" x2="1890" y2="982.9" stroke="#c2c2c2" stroke-width="1.8"/>
<rect x="781.8" y="915.8" width="53.5" height="25" fill="#bdbdbd"/>
<line x1="836" y1="941" x2="836" y2="982" stroke="#bdbdbd" stroke-width="1.2"/>
<rect x="829.5" y="936.8" width="13" height="22.5" fill="#fff" stroke="#c5c5c5" stroke-width="1"/>
<path d="M833.5 941v14M836 941v14M838.5 941v14" stroke="#9a9a9a" stroke-width="0.8"/>
<rect x="1837" y="916" width="53.6" height="24.6" fill="#bdbdbd"/>
<rect x="1884.5" y="938" width="7" height="21.5" fill="#fff" stroke="#c5c5c5" stroke-width="1"/>
<path d="M1888 942v13" stroke="#9a9a9a" stroke-width="0.8"/>
</svg>
<div class="t" style="left:451.79px;top:683.79px;font-size:30.72px;line-height:30.72px;color:#404040;transform-origin:0 0;transform:rotate(-90deg) scaleX(0.9293)">Sales change (%)</div>
<div class="t" style="left:50.58px;top:16.00px;font-size:23.04px;line-height:23.04px;transform-origin:0 0;transform:scaleX(0.9540);color:#fff;font-weight:400;">Back</div>
<div class="t" style="left:130.06px;top:16.00px;font-size:24.78px;line-height:24.78px;transform-origin:0 0;transform:scaleX(0.9521);color:#fff;font-weight:400;">Forecast Analytics 3.1.3</div>
<div class="t" style="left:408.00px;top:16.00px;font-size:24.78px;line-height:24.78px;transform-origin:0 0;transform:scaleX(0.9709);color:#fff;font-weight:400;">User: dbo;</div>
<div class="t" style="left:523.79px;top:16.00px;font-size:24.78px;line-height:24.78px;transform-origin:0 0;transform:scaleX(0.9352);color:#fff;font-weight:400;">DB: Jewelry_demo;</div>
<div class="t" style="left:731.06px;top:16.00px;font-size:24.78px;line-height:24.78px;transform-origin:0 0;transform:scaleX(0.8479);color:#fff;font-weight:400;">EOP;</div>
<div class="t" style="left:786.80px;top:16.00px;font-size:24.78px;line-height:24.78px;transform-origin:0 0;transform:scaleX(0.9801);color:#fff;font-weight:400;">DAO Week: 16 (April W3)</div>
<div class="t" style="left:77.91px;top:95.00px;font-size:19.13px;line-height:19.13px;transform-origin:0 0;transform:scaleX(0.9873);color:#f5882f;font-weight:400;">Sales and Demand</div>
<div class="t" style="left:76.99px;top:121.00px;font-size:19.13px;line-height:19.13px;transform-origin:0 0;transform:scaleX(1.0094);color:#f5882f;font-weight:400;">Forecasting</div>
<div class="t" style="left:344.93px;top:95.00px;font-size:19.13px;line-height:19.13px;transform-origin:0 0;transform:scaleX(0.9847);color:#22b3a1;font-weight:400;">Price Elasticity</div>
<div class="t" style="left:346.40px;top:121.00px;font-size:19.13px;line-height:19.13px;transform-origin:0 0;transform:scaleX(0.9952);color:#22b3a1;font-weight:400;">Analysis</div>
<div class="t" style="left:607.89px;top:95.00px;font-size:19.13px;line-height:19.13px;transform-origin:0 0;transform:scaleX(1.0754);color:#ffffff;font-weight:400;">Promotion</div>
<div class="t" style="left:609.50px;top:121.00px;font-size:19.13px;line-height:19.13px;transform-origin:0 0;transform:scaleX(0.9952);color:#ffffff;font-weight:400;">Analysis</div>
<div class="t" style="left:872.42px;top:95.00px;font-size:19.13px;line-height:19.13px;transform-origin:0 0;transform:scaleX(1.0597);color:#4a6fb3;font-weight:400;">Profit</div>
<div class="t" style="left:873.05px;top:121.00px;font-size:19.13px;line-height:19.13px;transform-origin:0 0;transform:scaleX(1.0599);color:#4a6fb3;font-weight:400;">Optimization</div>
<div class="t" style="left:1135.80px;top:95.00px;font-size:19.13px;line-height:19.13px;transform-origin:0 0;transform:scaleX(1.0069);color:#a8487a;font-weight:400;">Price Point</div>
<div class="t" style="left:1136.35px;top:121.00px;font-size:19.13px;line-height:19.13px;transform-origin:0 0;transform:scaleX(1.0637);color:#a8487a;font-weight:400;">Optimization</div>
<div class="t" style="left:1399.63px;top:95.00px;font-size:19.13px;line-height:19.13px;transform-origin:0 0;transform:scaleX(1.0488);color:#f8a12f;font-weight:400;">Product Affinity</div>
<div class="t" style="left:1401.20px;top:121.00px;font-size:19.13px;line-height:19.13px;transform-origin:0 0;transform:scaleX(0.9768);color:#f8a12f;font-weight:400;">Analysis</div>
<div class="t" style="left:1663.62px;top:95.00px;font-size:19.13px;line-height:19.13px;transform-origin:0 0;transform:scaleX(0.9802);color:#7aa62a;font-weight:400;">Cross</div>
<div class="t" style="left:1663.56px;top:121.00px;font-size:19.13px;line-height:19.13px;transform-origin:0 0;transform:scaleX(1.0481);color:#7aa62a;font-weight:400;">Correlation</div>
<div class="t" style="left:7.82px;top:215.00px;font-size:23.48px;line-height:23.48px;transform-origin:0 0;transform:scaleX(1.0227);color:#444444;font-weight:400;">Merchandise Hierarchy</div>
<div class="t" style="left:11.82px;top:261.00px;font-size:23.19px;line-height:23.19px;transform-origin:0 0;transform:scaleX(0.9334);color:#a2a2a2;font-weight:400;">Search ...</div>
<div class="t" style="left:57.38px;top:304.00px;font-size:19.71px;line-height:19.71px;transform-origin:0 0;transform:scaleX(0.9948);color:#3c3c3c;font-weight:400;">Company</div>
<div class="t" style="left:79.86px;top:334.00px;font-size:19.71px;line-height:19.71px;transform-origin:0 0;transform:scaleX(0.9242);color:#3c3c3c;font-weight:400;">1 BRIDAL</div>
<div class="t" style="left:80.18px;top:364.00px;font-size:19.71px;line-height:19.71px;transform-origin:0 0;transform:scaleX(0.8838);color:#3c3c3c;font-weight:400;">2 FINE JEWELRY</div>
<div class="t" style="left:80.46px;top:394.00px;font-size:19.71px;line-height:19.71px;transform-origin:0 0;transform:scaleX(0.8790);color:#3c3c3c;font-weight:400;">3 ESTATE</div>
<div class="t" style="left:80.70px;top:424.00px;font-size:19.71px;line-height:19.71px;transform-origin:0 0;transform:scaleX(0.9632);color:#3c3c3c;font-weight:400;">4 Fine Watches</div>
<div class="t" style="left:80.70px;top:454.00px;font-size:19.71px;line-height:19.71px;transform-origin:0 0;transform:scaleX(0.9789);color:#3c3c3c;font-weight:400;">405 Service</div>
<div class="t" style="left:80.69px;top:484.00px;font-size:19.71px;line-height:19.71px;transform-origin:0 0;transform:scaleX(1.0166);color:#3c3c3c;font-weight:400;">407 Other</div>
<div class="t" style="left:80.46px;top:514.00px;font-size:19.71px;line-height:19.71px;transform-origin:0 0;transform:scaleX(0.8707);color:#3c3c3c;font-weight:400;">5 TIMEPIECES</div>
<div class="t" style="left:80.17px;top:544.00px;font-size:19.42px;line-height:19.42px;transform-origin:0 0;transform:scaleX(0.9135);color:#ffffff;font-weight:400;">6 PERSONAL GIFTS</div>
<div class="t" style="left:80.15px;top:574.00px;font-size:19.71px;line-height:19.71px;transform-origin:0 0;transform:scaleX(0.9175);color:#3c3c3c;font-weight:400;">7 HOME GIFTS</div>
<div class="t" style="left:80.08px;top:604.00px;font-size:19.71px;line-height:19.71px;transform-origin:0 0;transform:scaleX(0.9957);color:#3c3c3c;font-weight:400;">99 Top Shop</div>
<div class="t" style="left:181.59px;top:986.00px;font-size:19.42px;line-height:19.42px;transform-origin:0 0;transform:scaleX(0.9315);color:#fff;font-weight:400;">Recalc</div>
<div class="t" style="left:433.85px;top:213.00px;font-size:23.91px;line-height:23.91px;transform-origin:0 0;transform:scaleX(0.9726);color:#ff7f7f;font-weight:700;">Promotion Analysis</div>
<div class="t" style="left:435.39px;top:255.00px;font-size:18.84px;line-height:18.84px;transform-origin:0 0;transform:scaleX(1.0317);color:#303030;font-weight:700;">Current *FP CSOH Unit:</div>
<div class="t" style="left:435.37px;top:285.00px;font-size:22.90px;line-height:22.90px;transform-origin:0 0;transform:scaleX(0.9332);color:#303030;font-weight:400;">TY:</div>
<div class="t" style="left:472.94px;top:285.00px;font-size:22.90px;line-height:22.90px;transform-origin:0 0;transform:scaleX(1.0658);color:#303030;font-weight:700;">6,228</div>
<div class="t" style="left:564.50px;top:285.00px;font-size:22.90px;line-height:22.90px;transform-origin:0 0;transform:scaleX(1.0055);color:#303030;font-weight:400;">LY:</div>
<div class="t" style="left:601.24px;top:285.00px;font-size:22.90px;line-height:22.90px;transform-origin:0 0;transform:scaleX(1.0658);color:#303030;font-weight:700;">6,228</div>
<div class="t" style="left:980.70px;top:255.00px;font-size:18.84px;line-height:18.84px;transform-origin:0 0;transform:scaleX(1.0110);color:#303030;font-weight:700;">Current *FP CSOH Ret:</div>
<div class="t" style="left:980.97px;top:284.00px;font-size:22.90px;line-height:22.90px;transform-origin:0 0;transform:scaleX(0.9269);color:#303030;font-weight:400;">TY:</div>
<div class="t" style="left:1018.38px;top:284.00px;font-size:22.90px;line-height:22.90px;transform-origin:0 0;transform:scaleX(1.0594);color:#303030;font-weight:700;">1,520,056</div>
<div class="t" style="left:1157.99px;top:284.00px;font-size:22.90px;line-height:22.90px;transform-origin:0 0;transform:scaleX(1.0091);color:#303030;font-weight:400;">LY:</div>
<div class="t" style="left:1194.18px;top:284.00px;font-size:22.90px;line-height:22.90px;transform-origin:0 0;transform:scaleX(1.0594);color:#303030;font-weight:700;">1,520,056</div>
<div class="t" style="left:1749.00px;top:255.00px;font-size:18.84px;line-height:18.84px;transform-origin:0 0;transform:scaleX(1.0147);color:#303030;font-weight:700;">AUR:</div>
<div class="t" style="left:1748.63px;top:284.00px;font-size:22.90px;line-height:22.90px;transform-origin:0 0;transform:scaleX(1.0763);color:#303030;font-weight:700;">228.59</div>
<div class="t" style="left:521.21px;top:795.00px;font-size:22.75px;line-height:22.75px;letter-spacing:0.000px;color:#424242;font-weight:400;">0</div>
<div class="t" style="left:508.37px;top:754.00px;font-size:22.75px;line-height:22.75px;transform-origin:0 0;transform:scaleX(1.0077);color:#424242;font-weight:400;">10</div>
<div class="t" style="left:508.74px;top:713.00px;font-size:22.75px;line-height:22.75px;transform-origin:0 0;transform:scaleX(0.9926);color:#424242;font-weight:400;">20</div>
<div class="t" style="left:509.10px;top:672.00px;font-size:22.75px;line-height:22.75px;transform-origin:0 0;transform:scaleX(0.9779);color:#424242;font-weight:400;">30</div>
<div class="t" style="left:509.46px;top:630.00px;font-size:22.75px;line-height:22.75px;transform-origin:0 0;transform:scaleX(0.9636);color:#424242;font-weight:400;">40</div>
<div class="t" style="left:509.10px;top:589.00px;font-size:22.75px;line-height:22.75px;transform-origin:0 0;transform:scaleX(0.9779);color:#424242;font-weight:400;">50</div>
<div class="t" style="left:508.74px;top:548.00px;font-size:22.75px;line-height:22.75px;transform-origin:0 0;transform:scaleX(0.9926);color:#424242;font-weight:400;">60</div>
<div class="t" style="left:508.74px;top:507.00px;font-size:22.75px;line-height:22.75px;transform-origin:0 0;transform:scaleX(0.9926);color:#424242;font-weight:400;">70</div>
<div class="t" style="left:509.10px;top:465.00px;font-size:22.75px;line-height:22.75px;transform-origin:0 0;transform:scaleX(0.9779);color:#424242;font-weight:400;">80</div>
<div class="t" style="left:508.74px;top:424.00px;font-size:22.75px;line-height:22.75px;transform-origin:0 0;transform:scaleX(0.9926);color:#424242;font-weight:400;">90</div>
<div class="t" style="left:497.12px;top:383.00px;font-size:22.75px;line-height:22.75px;transform-origin:0 0;transform:scaleX(0.9673);color:#424242;font-weight:400;">100</div>
<div class="t" style="left:497.06px;top:341.00px;font-size:22.75px;line-height:22.75px;transform-origin:0 0;transform:scaleX(1.0150);color:#424242;font-weight:400;">110</div>
<div class="t" style="left:569.18px;top:825.00px;font-size:22.90px;line-height:22.90px;transform-origin:0 0;transform:scaleX(0.9924);color:#424242;font-weight:400;">50</div>
<div class="t" style="left:632.71px;top:825.00px;font-size:22.90px;line-height:22.90px;transform-origin:0 0;transform:scaleX(0.9924);color:#424242;font-weight:400;">45</div>
<div class="t" style="left:695.89px;top:825.00px;font-size:22.90px;line-height:22.90px;transform-origin:0 0;transform:scaleX(0.9779);color:#424242;font-weight:400;">40</div>
<div class="t" style="left:758.69px;top:825.00px;font-size:22.90px;line-height:22.90px;transform-origin:0 0;transform:scaleX(1.0073);color:#424242;font-weight:400;">35</div>
<div class="t" style="left:821.88px;top:825.00px;font-size:22.90px;line-height:22.90px;transform-origin:0 0;transform:scaleX(0.9924);color:#424242;font-weight:400;">30</div>
<div class="t" style="left:884.66px;top:825.00px;font-size:22.90px;line-height:22.90px;transform-origin:0 0;transform:scaleX(1.0226);color:#424242;font-weight:400;">25</div>
<div class="t" style="left:947.86px;top:825.00px;font-size:22.90px;line-height:22.90px;transform-origin:0 0;transform:scaleX(1.0073);color:#424242;font-weight:400;">20</div>
<div class="t" style="left:1010.63px;top:825.00px;font-size:22.90px;line-height:22.90px;transform-origin:0 0;transform:scaleX(1.0385);color:#424242;font-weight:400;">15</div>
<div class="t" style="left:1073.82px;top:825.00px;font-size:22.90px;line-height:22.90px;transform-origin:0 0;transform:scaleX(1.0226);color:#424242;font-weight:400;">10</div>
<div class="t" style="left:1144.20px;top:825.00px;font-size:22.90px;line-height:22.90px;letter-spacing:0.000px;color:#424242;font-weight:400;">5</div>
<div class="t" style="left:1207.20px;top:825.00px;font-size:22.90px;line-height:22.90px;letter-spacing:0.000px;color:#424242;font-weight:400;">0</div>
<div class="t" style="left:1264.74px;top:825.00px;font-size:22.90px;line-height:22.90px;transform-origin:0 0;transform:scaleX(1.1487);color:#424242;font-weight:400;">-5</div>
<div class="t" style="left:1321.72px;top:825.00px;font-size:22.90px;line-height:22.90px;transform-origin:0 0;transform:scaleX(1.0689);color:#424242;font-weight:400;">-10</div>
<div class="t" style="left:1384.89px;top:825.00px;font-size:22.90px;line-height:22.90px;transform-origin:0 0;transform:scaleX(1.0810);color:#424242;font-weight:400;">-15</div>
<div class="t" style="left:1448.07px;top:825.00px;font-size:22.90px;line-height:22.90px;transform-origin:0 0;transform:scaleX(1.0689);color:#424242;font-weight:400;">-20</div>
<div class="t" style="left:1511.24px;top:825.00px;font-size:22.90px;line-height:22.90px;transform-origin:0 0;transform:scaleX(1.0810);color:#424242;font-weight:400;">-25</div>
<div class="t" style="left:1574.42px;top:825.00px;font-size:22.90px;line-height:22.90px;transform-origin:0 0;transform:scaleX(1.0689);color:#424242;font-weight:400;">-30</div>
<div class="t" style="left:1637.59px;top:825.00px;font-size:22.90px;line-height:22.90px;transform-origin:0 0;transform:scaleX(1.0810);color:#424242;font-weight:400;">-35</div>
<div class="t" style="left:1700.77px;top:825.00px;font-size:22.90px;line-height:22.90px;transform-origin:0 0;transform:scaleX(1.0689);color:#424242;font-weight:400;">-40</div>
<div class="t" style="left:1763.94px;top:825.00px;font-size:22.90px;line-height:22.90px;transform-origin:0 0;transform:scaleX(1.0810);color:#424242;font-weight:400;">-45</div>
<div class="t" style="left:1827.12px;top:825.00px;font-size:22.90px;line-height:22.90px;transform-origin:0 0;transform:scaleX(1.0689);color:#424242;font-weight:400;">-50</div>
<div class="t" style="left:1104.60px;top:864.00px;font-size:30.72px;line-height:30.72px;transform-origin:0 0;transform:scaleX(0.9374);color:#404040;font-weight:400;">AUR change (%)</div>
<div class="t" style="left:788.00px;top:920.00px;font-size:19.13px;line-height:19.13px;transform-origin:0 0;transform:scaleX(1.0244);color:#f4f4f4;font-weight:400;">W15</div>
<div class="t" style="left:1843.30px;top:920.00px;font-size:19.13px;line-height:19.13px;transform-origin:0 0;transform:scaleX(1.0296);color:#f4f4f4;font-weight:400;">W52</div>
<div class="t" style="left:538.33px;top:991.00px;font-size:18.84px;line-height:18.84px;transform-origin:0 0;transform:scaleX(0.8910);color:#a3a3a3;font-weight:400;">W5</div>
<div class="t" style="left:675.18px;top:991.00px;font-size:18.84px;line-height:18.84px;transform-origin:0 0;transform:scaleX(0.9407);color:#a3a3a3;font-weight:400;">W10</div>
<div class="t" style="left:817.78px;top:991.00px;font-size:18.84px;line-height:18.84px;transform-origin:0 0;transform:scaleX(0.9480);color:#a3a3a3;font-weight:400;">W15</div>
<div class="t" style="left:960.38px;top:991.00px;font-size:18.84px;line-height:18.84px;transform-origin:0 0;transform:scaleX(0.9407);color:#a3a3a3;font-weight:400;">W20</div>
<div class="t" style="left:1102.98px;top:991.00px;font-size:18.84px;line-height:18.84px;transform-origin:0 0;transform:scaleX(0.9480);color:#a3a3a3;font-weight:400;">W25</div>
<div class="t" style="left:1245.58px;top:991.00px;font-size:18.84px;line-height:18.84px;transform-origin:0 0;transform:scaleX(0.9407);color:#a3a3a3;font-weight:400;">W30</div>
<div class="t" style="left:1388.18px;top:991.00px;font-size:18.84px;line-height:18.84px;transform-origin:0 0;transform:scaleX(0.9480);color:#a3a3a3;font-weight:400;">W35</div>
<div class="t" style="left:1530.78px;top:991.00px;font-size:18.84px;line-height:18.84px;transform-origin:0 0;transform:scaleX(0.9407);color:#a3a3a3;font-weight:400;">W40</div>
<div class="t" style="left:1673.38px;top:991.00px;font-size:18.84px;line-height:18.84px;transform-origin:0 0;transform:scaleX(0.9480);color:#a3a3a3;font-weight:400;">W45</div>
<div class="t" style="left:1815.98px;top:991.00px;font-size:18.84px;line-height:18.84px;transform-origin:0 0;transform:scaleX(0.9407);color:#a3a3a3;font-weight:400;">W50</div>
</body></html>
